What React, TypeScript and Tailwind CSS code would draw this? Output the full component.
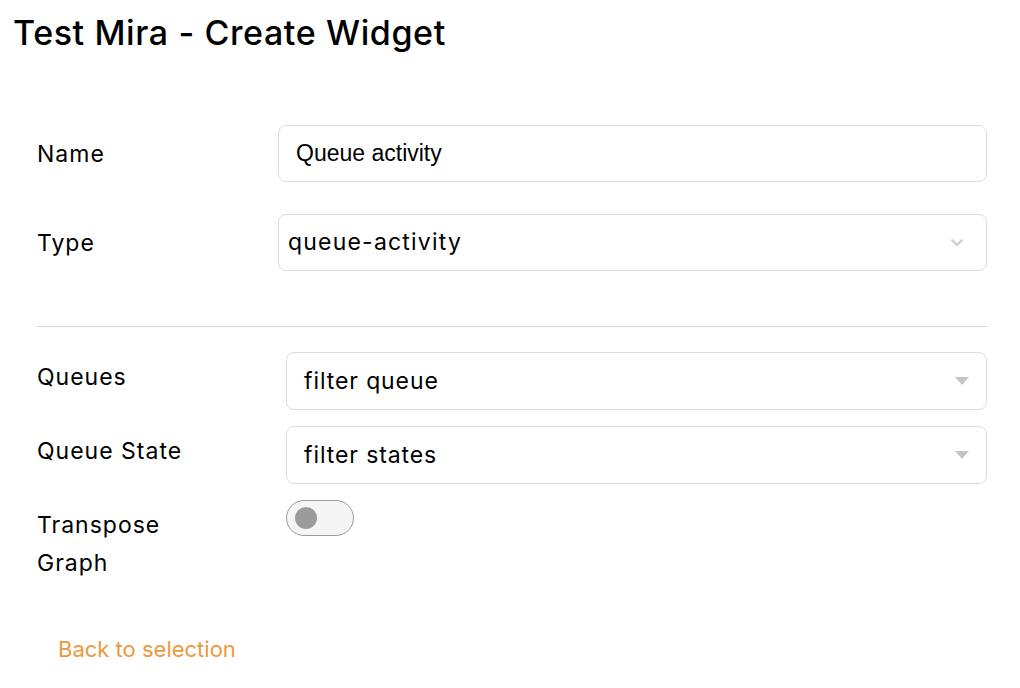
import React, { useState } from 'react';

const label = "text-[23px] leading-[38px] tracking-[1px] text-black";

function Caret() {
  return (
    <svg width="14" height="8" viewBox="0 0 14 8" className="shrink-0">
      <path d="M0 0 L14 0 L7 8 Z" fill="#c4c4c4" />
    </svg>
  );
}

function Chevron() {
  return (
    <svg width="14" height="9" viewBox="0 0 14 9" className="shrink-0">
      <path d="M1.5 1.5 L7 7 L12.5 1.5" fill="none" stroke="#d0d0d0" strokeWidth="2.4" />
    </svg>
  );
}

export default function App() {
  const [transpose, setTranspose] = useState(false);

  return (
    <div className="w-[1020px] h-[688px] bg-white font-['Inter','Noto_Sans',sans-serif] text-black">
      <h1 className="pl-[13px] pt-[12px] text-[34px] leading-[42px] font-medium tracking-[0.6px]">
        Test Mira - Create Widget
      </h1>

      <div className="pl-[37px] pr-[33px] pt-[71px]">
        <div className="flex flex-col gap-[32px]">
          <div className="flex items-center">
            <div className={`w-[241px] shrink-0 ${label}`}>Name</div>
            <input
              readOnly
              value="Queue activity"
              className="flex-1 h-[57px] rounded-[8px] border border-[#dcdcdc] px-[17px] text-[23px] font-['Liberation_Sans',Arial,sans-serif] outline-none"
            />
          </div>
          <div className="flex items-center">
            <div className={`w-[241px] shrink-0 ${label}`}>Type</div>
            <div className="flex-1 h-[57px] rounded-[8px] border border-[#dcdcdc] pl-[9px] pr-[22px] flex items-center justify-between text-[23px] tracking-[1.2px]">
              <span>queue-activity</span>
              <Chevron />
            </div>
          </div>
        </div>

        <div className="mt-[55px] h-px bg-[#d6d6d6]" />

        <div className="mt-[25px] flex flex-col gap-[16px]">
          <div className="flex items-start">
            <div className={`w-[249px] shrink-0 pt-[6px] ${label}`}>Queues</div>
            <div className="flex-1 h-[58px] rounded-[8px] border border-[#dcdcdc] pl-[17px] pr-[17px] flex items-center justify-between text-[23px] tracking-[0.9px]">
              <span>filter queue</span>
              <Caret />
            </div>
          </div>
          <div className="flex items-start">
            <div className={`w-[249px] shrink-0 pt-[6px] ${label}`}>Queue State</div>
            <div className="flex-1 h-[58px] rounded-[8px] border border-[#dcdcdc] pl-[17px] pr-[17px] flex items-center justify-between text-[23px] tracking-[0.9px]">
              <span>filter states</span>
              <Caret />
            </div>
          </div>
          <div className="flex items-start">
            <div className={`w-[249px] shrink-0 pt-[6px] ${label}`}>
              Transpose
              <br />
              Graph
            </div>
            <button
              type="button"
              onClick={() => setTranspose(!transpose)}
              className={`w-[68px] h-[36px] rounded-full border border-[#9a9a9a] bg-[#f5f5f5] flex items-center px-[8px] ${transpose ? 'justify-end' : 'justify-start'}`}
            >
              <span className="w-[22px] h-[22px] rounded-full bg-[#9b9b9b]" />
            </button>
          </div>
        </div>

        <a href="#" className="block mt-[52px] ml-[21px] text-[22px] leading-[30px] text-[#eb9a3e]">
          Back to selection
        </a>
      </div>
    </div>
  );
}
